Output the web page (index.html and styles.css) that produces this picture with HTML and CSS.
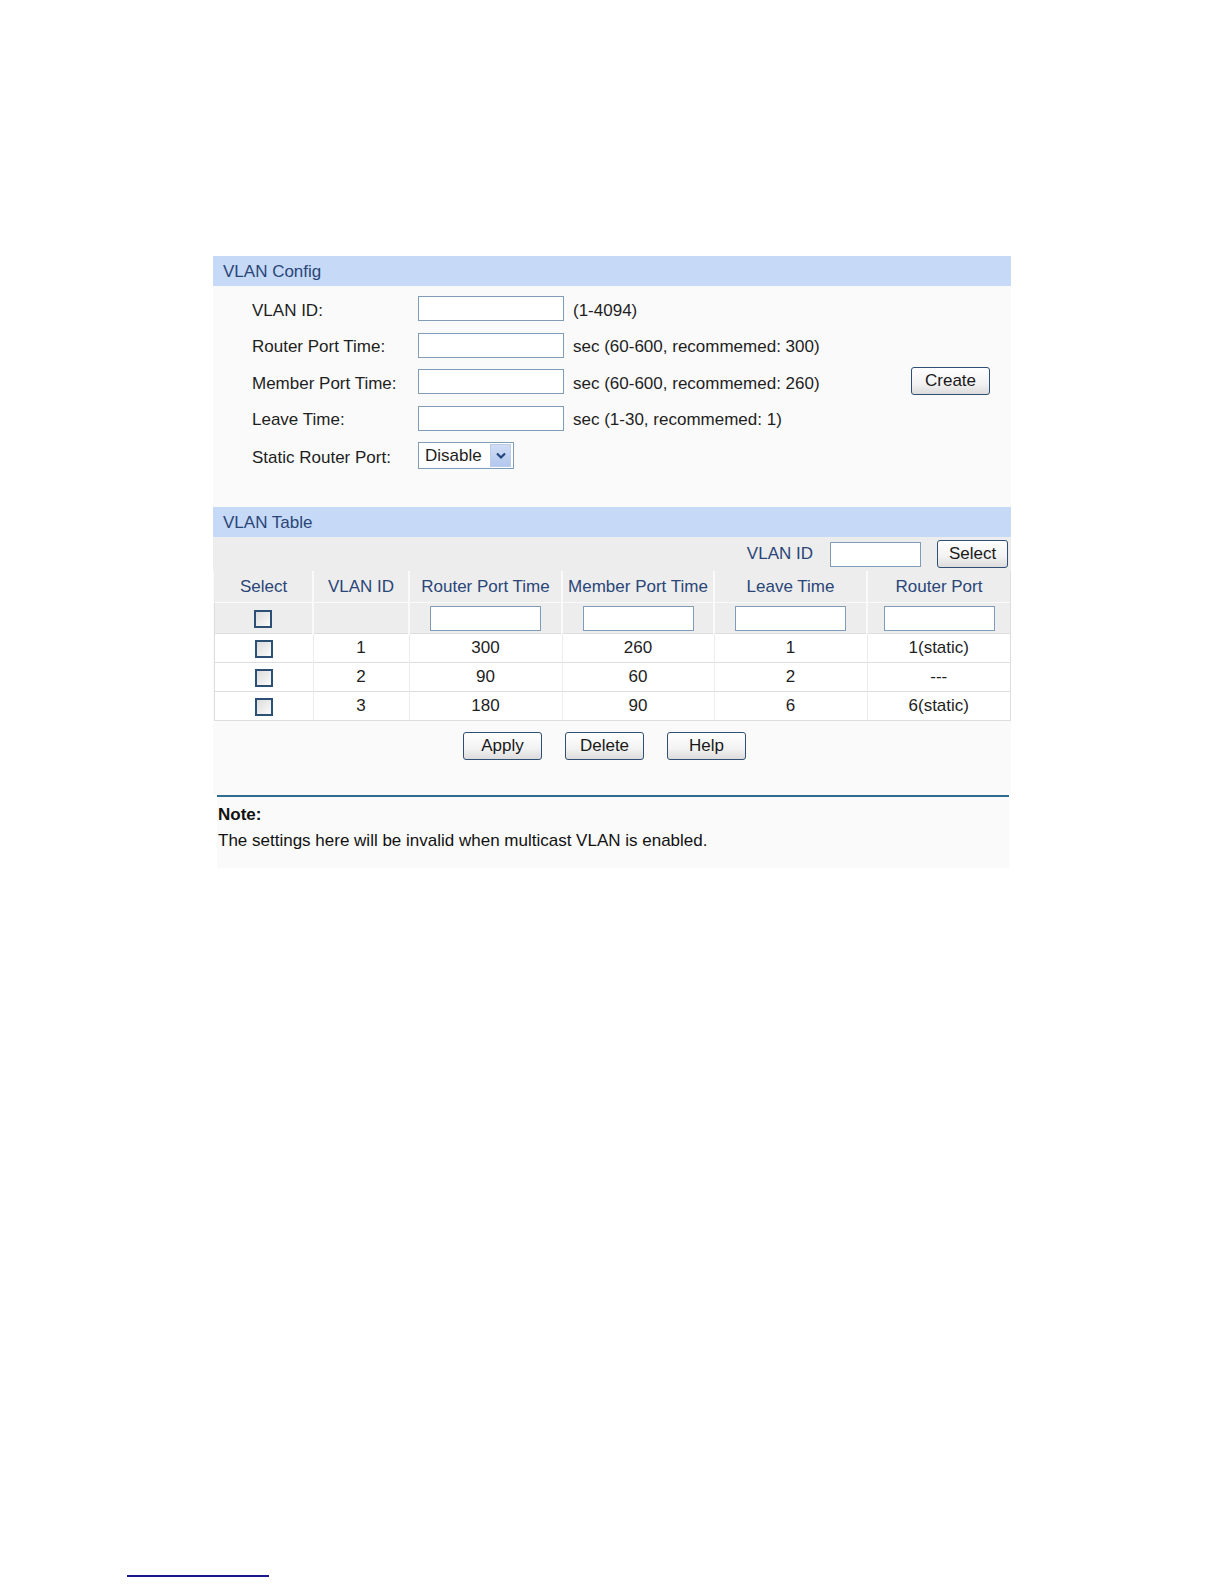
FILE: index.html
```html
<!DOCTYPE html>
<html lang="en">
<head>
    <meta charset="UTF-8">
    <title>IGMP Snooping - VLAN Config</title>
    <link rel="stylesheet" href="styles.css">
</head>
<body>
    <div class="page">
        <section class="panel">
            <div class="panel-title">VLAN Config</div>
            <div class="config-body">
                <div class="config-form">
                    <label class="field-label">VLAN ID:</label>
                    <input class="text-input" type="text">
                    <span class="hint">(1-4094)</span>

                    <label class="field-label">Router Port Time:</label>
                    <input class="text-input" type="text">
                    <span class="hint">sec (60-600, recommemed: 300)</span>

                    <label class="field-label">Member Port Time:</label>
                    <input class="text-input" type="text">
                    <span class="hint">sec (60-600, recommemed: 260)</span>

                    <label class="field-label">Leave Time:</label>
                    <input class="text-input" type="text">
                    <span class="hint">sec (1-30, recommemed: 1)</span>

                    <label class="field-label">Static Router Port:</label>
                    <div class="select-box">
                        <span class="select-value">Disable</span>
                        <span class="select-arrow">
                            <svg width="12" height="8" viewBox="0 0 12 8"><path d="M2 1.5 L6 5.5 L10 1.5" fill="none" stroke="#24457d" stroke-width="2.2"/></svg>
                        </span>
                    </div>
                    <span></span>
                </div>
                <div class="config-side">
                    <button class="btn">Create</button>
                </div>
            </div>
        </section>

        <section class="panel">
            <div class="panel-title">VLAN Table</div>
            <div class="search-bar">
                <span class="search-label">VLAN ID</span>
                <input class="search-input" type="text">
                <button class="btn btn-small">Select</button>
            </div>
            <table class="vlan-table">
                <thead>
                    <tr class="head-row">
                        <th class="col-select">Select</th>
                        <th class="col-id">VLAN ID</th>
                        <th class="col-router">Router Port Time</th>
                        <th class="col-member">Member Port Time</th>
                        <th class="col-leave">Leave Time</th>
                        <th>Router Port</th>
                    </tr>
                    <tr class="filter-row">
                        <td><span class="check"></span></td>
                        <td></td>
                        <td><input class="cell-input" type="text"></td>
                        <td><input class="cell-input" type="text"></td>
                        <td><input class="cell-input" type="text"></td>
                        <td><input class="cell-input" type="text"></td>
                    </tr>
                </thead>
                <tbody>
                    <tr>
                        <td><span class="check"></span></td>
                        <td>1</td>
                        <td>300</td>
                        <td>260</td>
                        <td>1</td>
                        <td>1(static)</td>
                    </tr>
                    <tr>
                        <td><span class="check"></span></td>
                        <td>2</td>
                        <td>90</td>
                        <td>60</td>
                        <td>2</td>
                        <td>---</td>
                    </tr>
                    <tr>
                        <td><span class="check"></span></td>
                        <td>3</td>
                        <td>180</td>
                        <td>90</td>
                        <td>6</td>
                        <td>6(static)</td>
                    </tr>
                </tbody>
            </table>
            <div class="actions">
                <button class="btn">Apply</button>
                <button class="btn">Delete</button>
                <button class="btn">Help</button>
            </div>
        </section>

        <div class="note">
            <p class="note-title">Note:</p>
            <p class="note-text">The settings here will be invalid when multicast VLAN is enabled.</p>
        </div>
    </div>

    <div class="footer-rule"></div>
</body>
</html>
```

FILE: styles.css
```css
body {
    margin: 0;
    background-color: #ffffff;
    font-family: "Liberation Sans", Arial, sans-serif;
    font-size: 17px;
    color: #1e1e1e;
}
.page {
    width: 798px;
    margin-left: 213px;
    padding-top: 256px;
}
.panel {
    background-color: #fafafa;
}
.panel-title {
    height: 30px;
    line-height: 31px;
    padding-left: 10px;
    background-color: #c6d9f6;
    color: #2a4678;
}

/* config form */
.config-body {
    display: flex;
    align-items: center;
    padding: 10px 21px 38px 39px;
}
.config-form {
    flex: 1;
    display: grid;
    grid-template-columns: 166px 146px auto;
    row-gap: 11.5px;
    align-items: center;
}
.field-label,
.hint {
    padding-top: 4px;
}
.hint {
    padding-left: 9px;
}
.text-input {
    box-sizing: border-box;
    width: 146px;
    height: 25px;
    margin: 0;
    border: 1px solid #7f9db9;
    background: #ffffff;
}
.select-box {
    box-sizing: border-box;
    display: flex;
    align-items: center;
    width: 96px;
    height: 27px;
    border: 1px solid #7f9db9;
    background: #ffffff;
}
.select-value {
    flex: 1;
    padding-left: 6px;
}
.select-arrow {
    display: flex;
    align-items: center;
    justify-content: center;
    width: 19px;
    height: 21px;
    margin-right: 2px;
    background: linear-gradient(#cfdcf5, #b3c8ee);
    border: 1px solid #bccbe8;
}
.config-side {
    margin-bottom: 4px;
}

/* buttons */
.btn {
    box-sizing: border-box;
    width: 79px;
    height: 28px;
    padding: 0;
    font-family: "Liberation Sans", Arial, sans-serif;
    font-size: 17px;
    color: #1a1a1a;
    border: 1px solid #2f4f74;
    border-radius: 3px;
    background: linear-gradient(#ffffff, #f2f2f2 60%, #dcdcdc);
}
.btn-small {
    width: 71px;
}

/* table */
.search-bar {
    display: flex;
    align-items: center;
    justify-content: flex-end;
    height: 34px;
    padding-right: 3px;
    background-color: #ededed;
}
.search-label {
    color: #2a4678;
    margin-right: 17px;
}
.search-input {
    box-sizing: border-box;
    width: 91px;
    height: 25px;
    margin: 0 16px 0 0;
    border: 1px solid #7f9db9;
    background: #ffffff;
}
.vlan-table {
    width: 100%;
    border-collapse: collapse;
    table-layout: fixed;
    text-align: center;
}
.col-select { width: 97px; }
.col-id { width: 94px; }
.col-router { width: 151px; }
.col-member { width: 150px; }
.col-leave { width: 151px; }
.vlan-table th {
    height: 31px;
    padding: 0;
    font-weight: normal;
    color: #2a4678;
    background-color: #ededed;
    border-left: 2px solid #fafafa;
}
.vlan-table th:first-child {
    border-left-color: transparent;
}
.vlan-table td {
    height: 28px;
    padding: 0;
    border-top: 1px solid #dedede;
    border-left: 1px solid #ececec;
    background-color: #ffffff;
}
.vlan-table .filter-row td {
    height: 30px;
    background-color: #ededed;
    border-top: 1px solid #fafafa;
    border-left: 2px solid #fafafa;
}
.vlan-table tbody tr:last-child td {
    border-bottom: 1px solid #dedede;
}
.vlan-table tr td:first-child {
    border-left: 1px solid #dedede;
}
.vlan-table tr td:last-child,
.vlan-table tr th:last-child {
    border-right: 1px solid #dedede;
}
.cell-input {
    box-sizing: border-box;
    width: 111px;
    height: 25px;
    margin: 0;
    vertical-align: middle;
    border: 1px solid #7f9db9;
    background: #ffffff;
}
.check {
    display: inline-block;
    box-sizing: border-box;
    width: 18px;
    height: 18px;
    vertical-align: middle;
    border: 2px solid #2b4f75;
    background: linear-gradient(135deg, #dcdcdc, #fbfbfb);
}
.actions {
    display: flex;
    gap: 23px;
    padding: 11px 0 35px 250px;
}

/* note */
.note {
    margin: 0 2px 0 4px;
    padding: 0 0 17px 1px;
    background-color: #fafafa;
    border-top: 2px solid #2f6d90;
}
.note-title {
    margin: 8px 0 0 0;
    font-weight: bold;
    color: #111111;
}
.note-text {
    margin: 6px 0 0 0;
    color: #111111;
}
.footer-rule {
    width: 142px;
    height: 2px;
    margin: 707px 0 0 127px;
    background-color: #1a1a8c;
}
```
